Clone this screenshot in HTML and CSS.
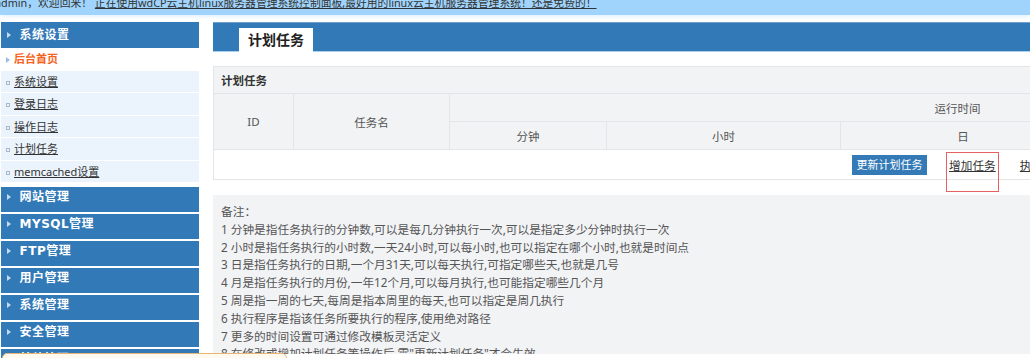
FILE: index.html
```html
<!DOCTYPE html>
<html lang="zh-CN">
<head>
<meta charset="utf-8">
<title>计划任务</title>
<link rel="stylesheet" href="styles.css">
</head>
<body>
<div class="topbar"><p>admin，欢迎回来！ <a href="#">正在使用wdCP云主机linux服务器管理系统控制面板,最好用的linux云主机服务器管理系统！还是免费的！</a></p></div>
<div class="layout">
  <aside class="sidebar">
    <div class="menu">
      <h3 class="menu-head first">系统设置</h3>
      <ul class="menu-list">
        <li class="active"><a href="#">后台首页</a></li>
        <li><a href="#">系统设置</a></li>
        <li><a href="#">登录日志</a></li>
        <li><a href="#">操作日志</a></li>
        <li><a href="#">计划任务</a></li>
        <li><a href="#">memcached设置</a></li>
      </ul>
    </div>
    <h3 class="menu-head">网站管理</h3>
    <h3 class="menu-head">MYSQL管理</h3>
    <h3 class="menu-head">FTP管理</h3>
    <h3 class="menu-head">用户管理</h3>
    <h3 class="menu-head">系统管理</h3>
    <h3 class="menu-head">安全管理</h3>
    <h3 class="menu-head">其他管理</h3>
  </aside>
  <main class="main">
    <div class="main-head"><span class="tab">计划任务</span></div>
    <table class="grid">
      <colgroup>
        <col class="c-id"><col class="c-name"><col class="c-min"><col class="c-hour"><col class="c-day"><col class="c-mon"><col class="c-week"><col class="c-prog"><col class="c-op">
      </colgroup>
      <tr class="r-title"><th colspan="9">计划任务</th></tr>
      <tr class="r-h1">
        <th rowspan="2">ID</th>
        <th rowspan="2">任务名</th>
        <th colspan="5">运行时间</th>
        <th rowspan="2">执行程序</th>
        <th rowspan="2">操作</th>
      </tr>
      <tr class="r-h2">
        <th>分钟</th><th>小时</th><th>日</th><th>月</th><th>周</th>
      </tr>
      <tr class="r-btn">
        <td colspan="9"><button class="btn" type="button">更新计划任务</button><a class="link" href="#">增加任务</a><a class="link link-2" href="#">执行计划任务</a></td>
      </tr>
    </table>
    <div class="notes">
      <p>备注：</p>
      <p>1 分钟是指任务执行的分钟数,可以是每几分钟执行一次,可以是指定多少分钟时执行一次</p>
      <p>2 小时是指任务执行的小时数,一天24小时,可以每小时,也可以指定在哪个小时,也就是时间点</p>
      <p>3 日是指任务执行的日期,一个月31天,可以每天执行,可指定哪些天,也就是几号</p>
      <p>4 月是指任务执行的月份,一年12个月,可以每月执行,也可能指定哪些几个月</p>
      <p>5 周是指一周的七天,每周是指本周里的每天,也可以指定是周几执行</p>
      <p>6 执行程序是指该任务所要执行的程序,使用绝对路径</p>
      <p>7 更多的时间设置可通过修改模板灵活定义</p>
      <p>8 在修改或增加计划任务等操作后,需"更新计划任务"才会生效</p>
    </div>
  </main>
</div>
<div class="annot"></div>
<div class="status"></div>
</body>
</html>
```
FILE: styles.css
```css
html, body {
  margin: 0;
  padding: 0;
}
body {
  position: relative;
  height: 358px;
  overflow: hidden;
  background: #fff;
  color: #333;
  font-family: "Noto Sans", "Noto Sans CJK SC", sans-serif;
}
a { color: #333; }

.topbar {
  height: 15px;
  background: #a0d4fc;
  overflow: hidden;
  font-size: 10.8px;
  box-shadow: 0 3px 3px -1px #e4f2fe;
}
.topbar p {
  margin: -5px 0 0 -5px;
  line-height: 16px;
  white-space: nowrap;
}
.topbar a { text-decoration: underline; }

.layout {
  display: flex;
  margin-top: 7px;
}

.sidebar {
  flex: none;
  width: 198px;
  margin-left: 1px;
}
.menu-head {
  margin: 0 0 2px;
  height: 25px;
  line-height: 25px;
  padding-left: 6px;
  background: #3279b7;
  color: #fff;
  font: bold 12px "DejaVu Sans", "Noto Sans CJK SC", sans-serif;
  letter-spacing: .5px;
  white-space: nowrap;
}
.menu-head::before {
  content: "";
  display: inline-block;
  width: 0;
  height: 0;
  border-left: 4px solid #c6daef;
  border-top: 3px solid transparent;
  border-bottom: 3px solid transparent;
  margin-right: 8.5px;
  vertical-align: 1px;
}
.menu-head.first {
  height: 26px;
  line-height: 26px;
  margin-bottom: 0;
}
.menu-list {
  list-style: none;
  margin: 0 0 4px;
  padding: 0;
}
.menu-list li {
  height: 21.5px;
  line-height: 22px;
  border-bottom: 1px solid #fff;
  background: #ebf3fc;
  font-size: 11px;
  padding-left: 5px;
  white-space: nowrap;
}
.menu-list li::before {
  content: "";
  display: inline-block;
  width: 2px;
  height: 2px;
  border: 1px solid #a9b8c8;
  margin-right: 4px;
  vertical-align: 1px;
}
.menu-list li.active {
  background: #fff;
}
.menu-list li.active::before {
  width: 0;
  height: 0;
  border: 0;
  border-left: 4px solid #9dbde0;
  border-top: 3px solid transparent;
  border-bottom: 3px solid transparent;
  margin-right: 4px;
  vertical-align: 0;
}
.menu-list li.active a {
  color: #f5641e;
  font-weight: bold;
  text-decoration: none;
}

.main {
  flex: 1;
  min-width: 0;
  margin-left: 14px;
  overflow: hidden;
}
.main-head {
  box-sizing: border-box;
  height: 30px;
  padding: 5px 0 0 26px;
  background: #3279b7;
  border-top: 1px solid #6f9fcd;
  border-bottom: 1px solid #a8cfee;
}
.tab {
  display: inline-block;
  vertical-align: top;
  width: 74px;
  height: 24px;
  line-height: 24px;
  text-align: center;
  background: #fff;
  color: #222;
  font-size: 14px;
  font-weight: bold;
}

.grid {
  margin-top: 14px;
  width: 1552px;
  table-layout: fixed;
  border-collapse: collapse;
  font-size: 11.5px;
  color: #555;
}
.c-id { width: 80px; }
.c-name { width: 156px; }
.c-min { width: 157px; }
.c-hour { width: 234px; }
.c-day { width: 245px; }
.c-mon { width: 190px; }
.c-week { width: 190px; }
.c-prog { width: 150px; }
.c-op { width: 150px; }
.grid th, .grid td {
  border: 1px solid #e3e5e9;
  padding: 0;
  font-weight: normal;
  background: #f2f3f5;
  text-align: center;
}
.r-title th {
  height: 26px;
  text-align: left;
  padding-left: 7px;
  font-weight: bold;
  color: #333;
}
.r-h1 th { height: 27px; }
.r-h2 th { height: 27px; }
.r-btn td {
  height: 29px;
  background: #fff;
  text-align: left;
  padding-left: 638px;
  white-space: nowrap;
}
.btn {
  display: inline-block;
  vertical-align: middle;
  width: 75px;
  height: 20px;
  padding: 0;
  border: 0;
  background: #337ab7;
  color: #fff;
  font-family: inherit;
  font-size: 11px;
  line-height: 20px;
}
.link {
  display: inline-block;
  vertical-align: middle;
  margin-left: 22px;
  font-size: 11.7px;
  color: #333;
  text-decoration: underline;
}
.link-2 { margin-left: 24px; }

.notes {
  margin-top: 15px;
  height: 159px;
  overflow: hidden;
  box-sizing: border-box;
  padding: 8px 8px 0;
  background: #f2f3f5;
  color: #555;
  font-size: 11.7px;
  line-height: 17.8px;
  white-space: nowrap;
}
.notes p { margin: 0; }

.annot {
  position: absolute;
  left: 946px;
  top: 152px;
  width: 51px;
  height: 38px;
  border: 1px solid #e66262;
}
.status {
  position: absolute;
  left: 2px;
  top: 353px;
  width: 283px;
  height: 14px;
  border: 1px solid #e5b677;
  border-radius: 5px;
  background: #fffaf0;
}
```
